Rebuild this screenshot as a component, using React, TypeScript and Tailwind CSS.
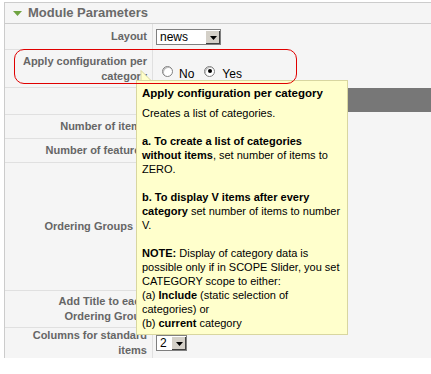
import type { ReactNode } from 'react'

function Row({ h, label, border = true, pr = 'pr-[5px]', children }: { h: string; label?: ReactNode; border?: boolean; pr?: string; children?: ReactNode }) {
  return (
    <div className={`flex ${h}`}>
      <div
        className={`w-[148px] shrink-0 flex items-center justify-end ${pr} text-right text-[11px] leading-[15px] font-bold text-[#666] border-r border-[#e0e0e0] ${
          border ? 'border-b' : ''
        }`}
      >
        <span>{label}</span>
      </div>
      <div className="flex-1 flex items-center pl-[3px]">{children}</div>
    </div>
  )
}

function Select({ value, w }: { value: string; w: string }) {
  return (
    <div className={`flex h-[16px] ${w} border border-[#7f7f7f] bg-white`}>
      <span className="flex-1 pl-[3px] text-[12px] leading-[14px] text-black">{value}</span>
      <span className="flex w-[15px] items-center justify-center border-l border-t border-l-white border-t-white bg-[#d4d0c8] shadow-[inset_-1px_-1px_0_#404040]">
        <svg width="7" height="4" viewBox="0 0 7 4">
          <path d="M0 0h7L3.5 4z" fill="#000" />
        </svg>
      </span>
    </div>
  )
}

function Radio({ checked }: { checked?: boolean }) {
  return (
    <span className="flex h-[11px] w-[11px] items-center justify-center rounded-full border border-[#808080] bg-white shadow-[inset_1px_1px_0_#c0c0c0]">
      {checked && <span className="h-[4px] w-[4px] rounded-full bg-black" />}
    </span>
  )
}

export default function App() {
  return (
    <div className="relative h-[374px] w-[431px] overflow-hidden bg-white font-['Liberation_Sans',Arial,sans-serif]">
      <div className="ml-[4px] mt-[2px] border-l border-t border-[#ccc] bg-[#f5f5f5]">
        <div className="flex h-[21px] items-center border-b border-[#ccc] pl-[8px]">
          <svg width="9" height="5" viewBox="0 0 9 5" className="mr-[6px]">
            <path d="M0 0h9L4.5 5z" fill="#6fa341" />
          </svg>
          <span className="text-[13px] font-bold text-[#6a6a6a]">Module Parameters</span>
        </div>

        <Row h="h-[26px]" label="Layout">
          <Select value="news" w="w-[65px]" />
        </Row>

        <Row
          h="h-[38px]"
          label={
            <>
              Apply configuration per
              <br />
              category
            </>
          }
        >
          <div className="flex items-center pl-[6px] pt-[4px] text-[12px] text-black">
            <Radio />
            <span className="ml-[6px] mt-[6px]">No</span>
            <span className="ml-[10px]">
              <Radio checked />
            </span>
            <span className="ml-[7px] mt-[6px]">Yes</span>
          </div>
        </Row>

        <div className="flex h-[27px]">
          <div className="w-[148px] shrink-0 border-b border-r border-[#e0e0e0]" />
          <div className="flex-1">
            <div className="h-[24px] bg-[#777]" />
          </div>
        </div>

        <Row h="h-[24px]" label="Number of items" />
        <Row h="h-[24px]" label="Number of featured" />
        <Row h="h-[128px]" label="Ordering Groups" pr="pr-[19px]" />
        <Row
          h="h-[37px]"
          label={
            <>
              Add Title to each
              <br />
              Ordering Group
            </>
          }
        />
        <Row
          h="h-[30px]"
          border={false}
          label={
            <>
              Columns for standard
              <br />
              items
            </>
          }
        >
          <Select value="2" w="w-[31px]" />
        </Row>
      </div>

      {/* tooltip */}
      <svg className="absolute left-[138px] top-[70px]" width="16" height="12" viewBox="0 0 16 12">
        <path d="M3 11.5V0.5L14 11.5" fill="#ffffcc" stroke="#d8d6a0" />
      </svg>
      <div className="absolute left-[136px] top-[80px] h-[255px] w-[212px] border border-[#d8d6a0] bg-[#ffffcc] px-[5px] pt-[5px] text-[11px] leading-[14px] text-black whitespace-nowrap">
        <div className="text-[11.5px] font-bold">Apply configuration per category</div>
        <div className="mt-[6px]">
          Creates a list of categories.
          <br />
          <br />
          <b>a. To create a list of categories</b>
          <br />
          <b>without items</b>, set number of items to
          <br />
          ZERO.
          <br />
          <br />
          <b>b. To display V items after every</b>
          <br />
          <b>category</b> set number of items to number
          <br />
          V.
          <br />
          <br />
          <b>NOTE:</b> Display of category data is
          <br />
          possible only if in SCOPE Slider, you set
          <br />
          CATEGORY scope to either:
          <br />
          (a) <b>Include</b> (static selection of
          <br />
          categories) or
          <br />
          (b) <b>current</b> category
        </div>
      </div>

      {/* annotation outline */}
      <div className="pointer-events-none absolute left-[14px] top-[49px] h-[35px] w-[283px] rounded-[10px] border border-[#e00000]" />
    </div>
  )
}
